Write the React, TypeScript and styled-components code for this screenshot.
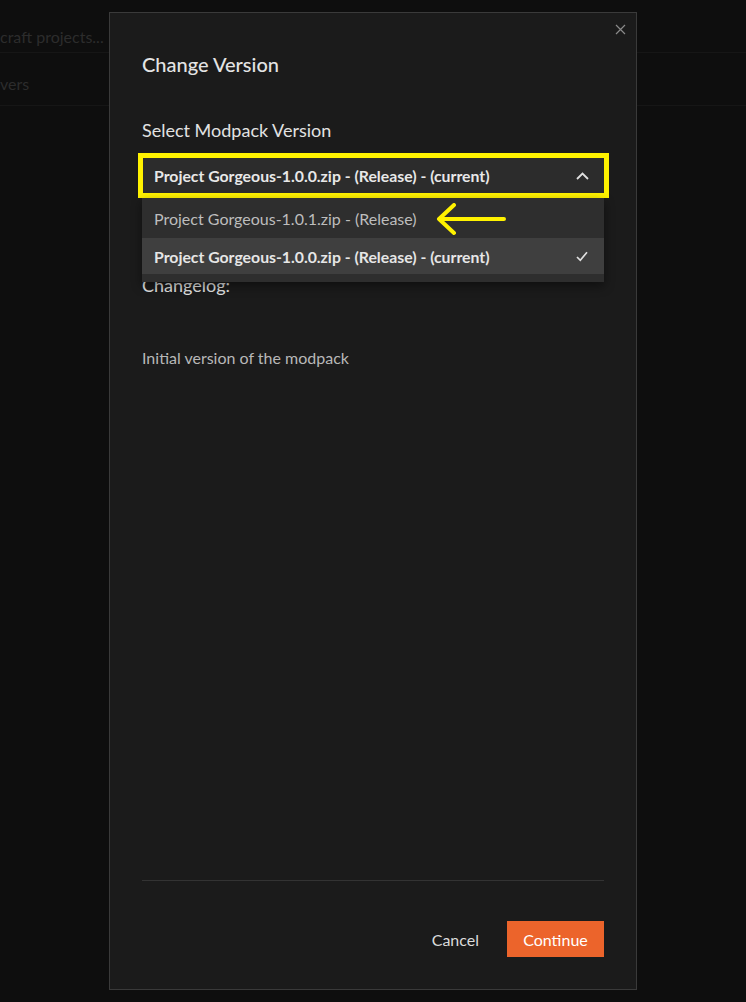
import styled, { createGlobalStyle } from "styled-components";

const GlobalStyle = createGlobalStyle`
  html, body {
    margin: 0;
    padding: 0;
    background: #0e0e0e;
    font-family: Lato, "Open Sans", "Liberation Sans", sans-serif;
    -webkit-font-smoothing: antialiased;
  }
  * { box-sizing: border-box; }
`;

const Page = styled.div`
  width: 746px;
  height: 1002px;
  overflow: hidden;
  position: relative;
  background: #0e0e0e;
`;

const BackRow = styled.div<{ $pad: number }>`
  height: 53px;
  padding-top: ${(p) => p.$pad}px;
  border-bottom: 1px solid #161616;
  color: #2c2c2c;
  font-size: 16px;
  line-height: 22px;
  white-space: nowrap;
`;

const Overlay = styled.div`
  position: absolute;
  inset: 0;
  display: flex;
  align-items: flex-start;
  justify-content: center;
  padding-top: 12px;
`;

const Modal = styled.div`
  position: relative;
  width: 528px;
  height: 978px;
  background: #1b1b1b;
  border: 1px solid #3a3a3a;
  display: flex;
  flex-direction: column;
  padding: 38px 32px 32px;
  color: #e2e2e2;
`;

const CloseButton = styled.button`
  position: absolute;
  top: 10px;
  right: 10px;
  width: 12px;
  height: 12px;
  padding: 0;
  border: none;
  background: none;
  display: flex;
  align-items: center;
  justify-content: center;
  cursor: pointer;
`;

const Title = styled.h2`
  margin: 0;
  font-size: 20px;
  line-height: 26px;
  font-weight: 500;
  color: #e4e4e4;
`;

const Label = styled.div`
  margin-top: 42px;
  font-size: 18px;
  line-height: 22px;
  color: #e2e2e2;
`;

const SelectWrap = styled.div`
  position: relative;
  margin-top: 12px;
`;

const Trigger = styled.div`
  height: 45px;
  margin: 0 -5px 0 -4px;
  border: 5px solid #fff200;
  background: #2c2c2c;
  display: flex;
  align-items: center;
  justify-content: space-between;
  padding: 0 15px 0 11px;
  font-size: 15.8px;
  font-weight: 700;
  color: #e8e8e8;
`;

const Menu = styled.div`
  position: absolute;
  top: 45px;
  left: 0;
  right: 0;
  background: #2e2e2e;
  padding-bottom: 8px;
  box-shadow: 0 4px 10px rgba(0, 0, 0, 0.45);
  z-index: 2;
`;

const Option = styled.div<{ $selected?: boolean; $h: number }>`
  height: ${(p) => p.$h}px;
  display: flex;
  align-items: center;
  justify-content: space-between;
  padding: 0 16px 0 12px;
  font-size: ${(p) => (p.$selected ? 15.8 : 16)}px;
  font-weight: ${(p) => (p.$selected ? 700 : 400)};
  color: ${(p) => (p.$selected ? "#e6e6e6" : "#bdbdbd")};
  background: ${(p) => (p.$selected ? "#3f3f3f" : "transparent")};
`;

const ArrowMark = styled.svg`
  position: absolute;
  left: 293px;
  top: 5px;
`;

const Body = styled.div`
  flex: 1;
`;

const SectionTitle = styled.div`
  margin-top: 76px;
  font-size: 18px;
  line-height: 22px;
  color: #e2e2e2;
`;

const Changelog = styled.p`
  margin: 52px 0 0;
  font-size: 16px;
  line-height: 20px;
  color: #b8b8b8;
`;

const Divider = styled.div`
  height: 1px;
  background: #333333;
`;

const Footer = styled.div`
  display: flex;
  justify-content: flex-end;
  align-items: center;
  gap: 28px;
  margin-top: 40px;
`;

const TextButton = styled.button`
  border: none;
  background: none;
  padding: 0;
  font-family: inherit;
  font-size: 16px;
  color: #dcdcdc;
  cursor: pointer;
`;

const PrimaryButton = styled.button`
  width: 97px;
  height: 36px;
  border: none;
  background: #ec642b;
  color: #ffffff;
  font-family: inherit;
  font-size: 16px;
  cursor: pointer;
`;

export default function App() {
  return (
    <>
      <GlobalStyle />
      <Page>
        <BackRow $pad={26}>craft projects...</BackRow>
        <BackRow $pad={20}>vers</BackRow>
        <Overlay>
          <Modal>
            <CloseButton aria-label="Close">
              <svg width="11" height="11" viewBox="0 0 11 11">
                <path d="M1 1L10 10M10 1L1 10" stroke="#8a8a8a" strokeWidth="1.2" />
              </svg>
            </CloseButton>
            <Title>Change Version</Title>
            <Label>Select Modpack Version</Label>
            <SelectWrap>
              <Trigger>
                <span>Project Gorgeous-1.0.0.zip - (Release) - (current)</span>
                <svg width="13" height="8" viewBox="0 0 13 8">
                  <path d="M1 7L6.5 1.5L12 7" fill="none" stroke="#e0e0e0" strokeWidth="1.8" />
                </svg>
              </Trigger>
              <Menu>
                <Option $h={40}>
                  <span>Project Gorgeous-1.0.1.zip - (Release)</span>
                </Option>
                <Option $h={36} $selected>
                  <span>Project Gorgeous-1.0.0.zip - (Release) - (current)</span>
                  <svg width="12" height="11" viewBox="0 0 12 11">
                    <path d="M1 6L4.3 9.3L11 1.2" fill="none" stroke="#e0e0e0" strokeWidth="1.7" />
                  </svg>
                </Option>
                <ArrowMark width="72" height="34" viewBox="0 0 72 34">
                  <path
                    d="M69 16H4M19 2L4 16L19 30"
                    fill="none"
                    stroke="#fff200"
                    strokeWidth="4"
                    strokeLinecap="round"
                    strokeLinejoin="round"
                  />
                </ArrowMark>
              </Menu>
            </SelectWrap>
            <Body>
              <SectionTitle>Changelog:</SectionTitle>
              <Changelog>Initial version of the modpack</Changelog>
            </Body>
            <Divider />
            <Footer>
              <TextButton>Cancel</TextButton>
              <PrimaryButton>Continue</PrimaryButton>
            </Footer>
          </Modal>
        </Overlay>
      </Page>
    </>
  );
}
